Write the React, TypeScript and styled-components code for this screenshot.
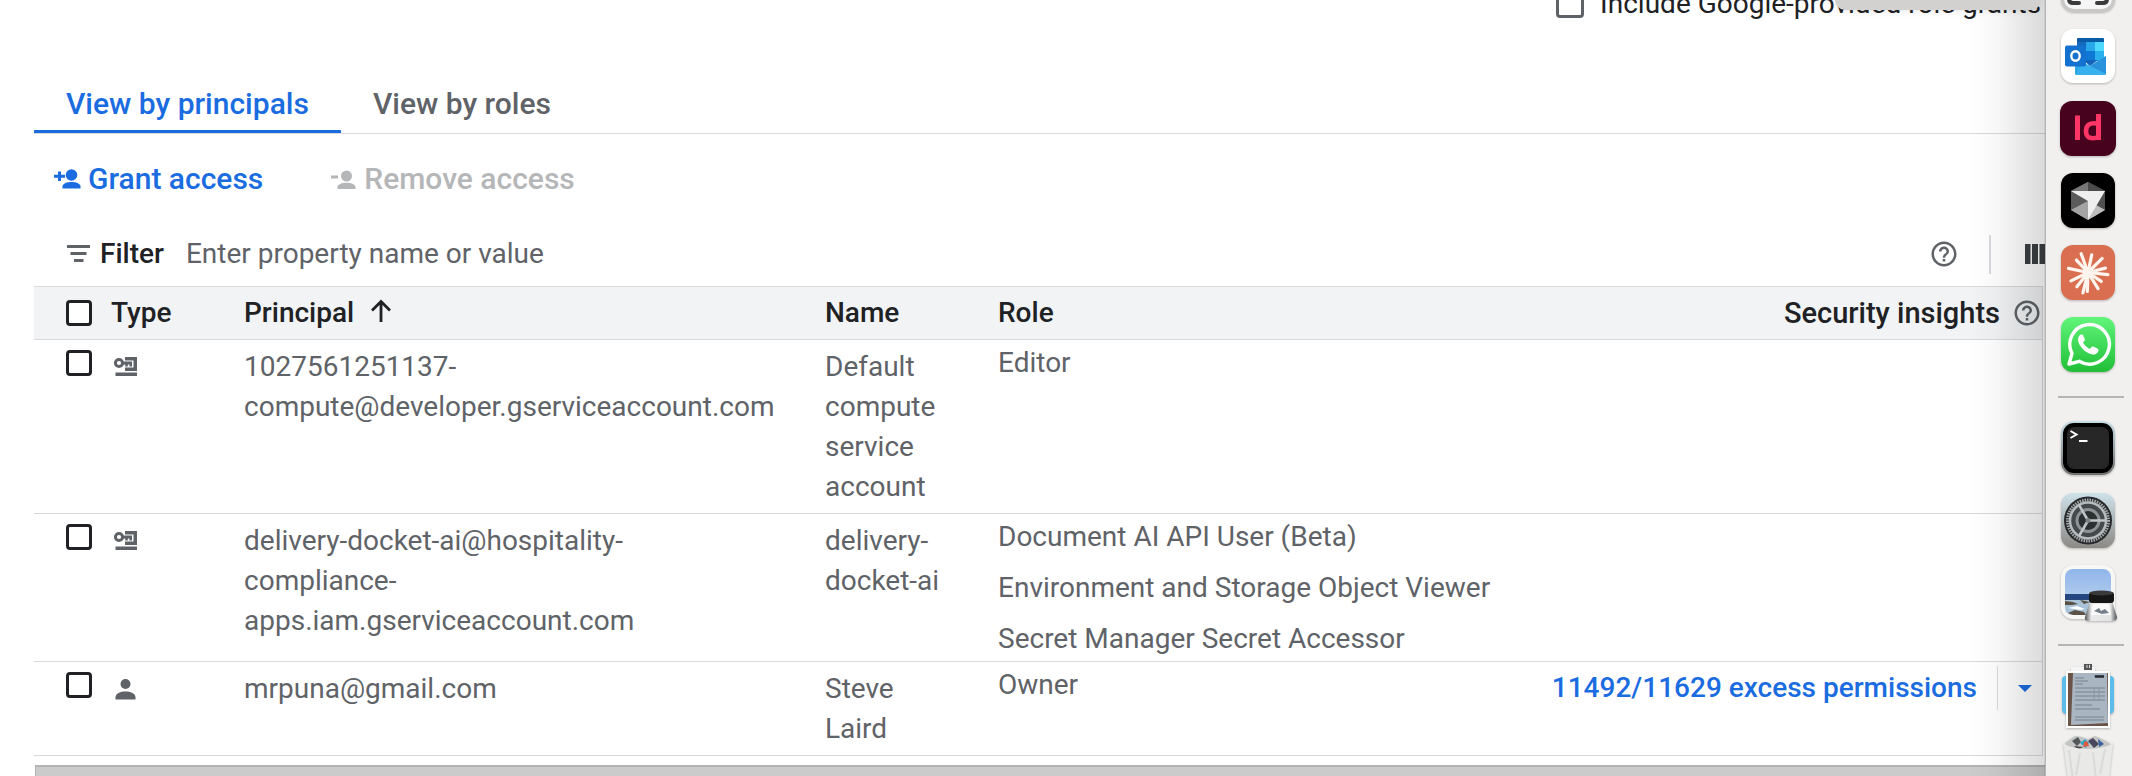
import React from 'react';
import styled, { createGlobalStyle } from 'styled-components';
import { MdHelpOutline } from 'react-icons/md';

const blue = '#1a6ce0';
const ink = '#202124';
const muted = '#5f6368';
const rule = '#d7d9dc';

const GlobalStyle = createGlobalStyle`
  *, *::before, *::after { box-sizing: border-box; }
  body {
    margin: 0;
    background: #fff;
    color: ${ink};
    font: 400 28px/40px Roboto, "Liberation Sans", sans-serif;
    overflow: hidden;
  }
  button, input { font: inherit; color: inherit; }
`;

const Page = styled.div`
  display: grid;
  grid-template-columns: minmax(0, 1fr) 87px;
  height: 100vh;
`;

const Main = styled.main`
  display: flex;
  flex-direction: column;
  min-width: 0;
  padding-left: 34px;
  overflow: hidden;
`;

const OptionRow = styled.div`
  display: flex;
  justify-content: flex-end;
  margin: -16px 4px 53px 0;
`;

const OptionLabel = styled.label`
  display: flex;
  align-items: center;
  gap: 16px;
`;

const CheckBox = styled.input.attrs({ type: 'checkbox' })<{ $tone?: string; $size?: number }>`
  appearance: none;
  display: block;
  flex: none;
  width: ${(p) => p.$size ?? 26}px;
  height: ${(p) => p.$size ?? 26}px;
  margin: 0;
  border: 3px solid ${(p) => p.$tone ?? ink};
  border-radius: 4px;
  background: #fff;
`;

const FloatingBar = styled.div`
  position: absolute;
  top: 0;
  right: 91px;
  width: 206px;
  height: 10px;
  border-radius: 0 0 10px 10px;
  background: #d2d1cf;
  box-shadow: 0 0 8px rgba(0, 0, 0, 0.12);
`;

const Tabs = styled.div`
  display: flex;
  flex: none;
  height: 57px;
  border-bottom: 1px solid ${rule};
`;

const Tab = styled.button<{ $active?: boolean }>`
  height: 56px;
  padding: 0 32px;
  border: 0;
  border-bottom: 3px solid ${(p) => (p.$active ? blue : 'transparent')};
  background: none;
  color: ${(p) => (p.$active ? blue : muted)};
  font-size: 30px;
  font-weight: 500;
`;

const Toolbar = styled.div`
  display: flex;
  flex: none;
  align-items: center;
  gap: 68px;
  height: 88px;
  padding: 2px 0 0 20px;
`;

const Action = styled.button`
  display: flex;
  align-items: center;
  gap: 7px;
  padding: 0;
  border: 0;
  background: none;
  color: ${blue};
  font-size: 30px;
  font-weight: 500;
  &:disabled { color: #b5b6b8; }
`;

const FilterBar = styled.div`
  display: flex;
  flex: none;
  align-items: center;
  height: 64px;
  padding-left: 33px;
  color: ${muted};
`;

const FilterLabel = styled.label`
  display: flex;
  align-items: center;
  gap: 10px;
  margin-right: 22px;
  font-weight: 500;
  span { color: ${ink}; }
`;

const FilterInput = styled.input`
  flex: 1;
  min-width: 0;
  padding: 0;
  border: 0;
  outline: 0;
  background: none;
  &::placeholder { color: ${muted}; opacity: 1; }
`;

const IconButton = styled.button`
  display: flex;
  padding: 0;
  border: 0;
  background: none;
  color: ${muted};
`;

const Divider = styled.span<{ $size: number; $weight: number }>`
  width: ${(p) => p.$weight}px;
  height: ${(p) => p.$size}px;
  background: ${rule};
`;

const FilterTools = styled.div`
  display: flex;
  align-items: center;
  gap: 30px;
`;

const ColumnsButton = styled(IconButton)`
  margin-left: 4px;
  color: #3c4043;
`;

const TableFrame = styled.div`
  flex: none;
  margin-right: 2px;
  border-right: 1px solid ${rule};
`;

const Table = styled.table`
  width: 100%;
  table-layout: fixed;
  border-spacing: 0;
`;

const Col = styled.col<{ $width?: number }>`
  width: ${(p) => (p.$width ? `${p.$width}px` : 'auto')};
`;

const HeadCell = styled.th`
  height: 54px;
  padding: 0;
  border-top: 1px solid ${rule};
  border-bottom: 1px solid ${rule};
  background: #f1f3f4;
  font-weight: 500;
  text-align: left;
  vertical-align: middle;
`;

const HeadContent = styled.div<{ $end?: boolean }>`
  display: flex;
  align-items: center;
  justify-content: ${(p) => (p.$end ? 'flex-end' : 'flex-start')};
  gap: ${(p) => (p.$end ? 12 : 16)}px;
  font-size: ${(p) => (p.$end ? 29 : 28)}px;
`;

const Cell = styled.td<{ $top?: number; $bottom?: number }>`
  padding: ${(p) => p.$top ?? 7}px 0 ${(p) => p.$bottom ?? 6}px;
  border-bottom: 1px solid ${rule};
  color: ${muted};
  vertical-align: top;
`;

const CheckSlot = styled.div`
  padding-left: 32px;
`;

const TypeIcon = styled.div`
  display: flex;
  padding-left: 3px;
`;

const Roles = styled.ul`
  display: grid;
  gap: 11px;
  margin: 0;
  padding: 0;
  list-style: none;
`;

const Insight = styled.div`
  display: flex;
  align-items: center;
  justify-content: flex-end;
  height: 44px;
  padding-right: 10px;
`;

const InsightLink = styled.a`
  margin-right: 20px;
  color: ${blue};
  font-weight: 500;
  text-decoration: none;
  white-space: nowrap;
`;

const MenuButton = styled(IconButton)`
  margin-left: 20px;
  color: ${blue};
`;

const ScrollTrack = styled.div`
  flex: 1;
  margin: 9px 0 0 1px;
  border: solid #b3b3b3;
  border-width: 2px 0 0 1px;
  background: #cbcbcb;
`;

const Dock = styled.aside`
  position: relative;
  min-height: 0;
  border-left: 1px solid #f7f6f5;
  background: #f1f0ee;
  &::before {
    content: '';
    position: absolute;
    top: 0;
    bottom: 0;
    right: 100%;
    width: 76px;
    background: linear-gradient(to right, rgba(0, 0, 0, 0), rgba(0, 0, 0, 0.03) 35%, rgba(0, 0, 0, 0.14) 97%, rgba(0, 0, 0, 0.3));
    pointer-events: none;
  }
`;

const DockScroll = styled.div`
  height: 100%;
  overflow: hidden;
`;

const DockList = styled.div`
  display: flex;
  flex-direction: column;
  align-items: center;
  gap: 16px;
  margin-top: -43px;
  padding-right: 2px;
`;

const DockApp = styled.button`
  flex: none;
  display: block;
  height: 56px;
  padding: 0;
  border: 0;
  background: none;
  svg { display: block; overflow: visible; filter: drop-shadow(0 1px 1px rgba(0, 0, 0, 0.25)); }
`;

const DockRule = styled.hr`
  flex: none;
  width: 66px;
  height: 2px;
  margin: 7px 0 7px 6px;
  border: 0;
  background: #b6b5b3;
`;

const PersonAdd = () => (
  <svg width="27" height="22" viewBox="0 0 27 22" fill="currentColor" aria-hidden="true">
    <circle cx="17.5" cy="7" r="5.8" />
    <path d="M8.5 20.5v-2.2c0-2.9 5-4.3 9-4.3s9 1.4 9 4.3v2.2z" />
    <path d="M4 3.5h3v3.2h4v3H7V13H4V9.7H0v-3h4z" />
  </svg>
);

const PersonRemove = () => (
  <svg width="26" height="22" viewBox="0 0 26 22" fill="currentColor" aria-hidden="true">
    <circle cx="15.5" cy="8" r="5.5" />
    <path d="M6.5 21v-2c0-2.8 5-4.2 9-4.2s9 1.4 9 4.2v2zM0 7.5h7v3H0z" />
  </svg>
);

const FilterIcon = () => (
  <svg width="23" height="18" viewBox="0 0 23 18" fill="currentColor" aria-hidden="true">
    <path d="M0 0h23v3H0zM3.5 7h16v3h-16zM7 14h9.5v3H7z" />
  </svg>
);

const ServiceAccountIcon = () => (
  <svg width="24" height="40" viewBox="0 0 24 40" fill="currentColor" role="img" aria-label="Service account">
    <path d="M1.5 25.5H23V29H1.5zM11 10h12v14H11v-3.500h8.500v-7H11z" />
    <circle cx="5" cy="16" r="3.600" fill="none" stroke="currentColor" strokeWidth="3" />
    <path d="M8 14.500h10v5h-2.600v-2h-1.600v2h-2.600v-2H8z" />
  </svg>
);

const PersonIcon = () => (
  <svg width="24" height="40" viewBox="0 0 24 40" fill="currentColor" role="img" aria-label="User">
    <circle cx="11.5" cy="15" r="5" />
    <path d="M1.5 30.5v-2.3c0-3.7 5-5.7 10-5.7s10 2 10 5.7v2.3z" />
  </svg>
);

const ArrowUp = () => (
  <svg width="22" height="28" viewBox="0 0 22 28" fill="none" stroke="currentColor" strokeWidth="2.800" aria-hidden="true">
    <path d="M11 23V3M2 11.500l9-9 9 9" />
  </svg>
);

const ColumnsIcon = () => (
  <svg width="20" height="20" viewBox="0 0 20 20" fill="currentColor" aria-hidden="true">
    <path d="M0 0h5.500v20H0zM7 0h6v20H7zM14.500 0h6v20h-6z" />
  </svg>
);

const CaptureApp = () => (
  <svg width="56" height="56" viewBox="0 0 56 56">
    <rect x="1" y="1" width="54" height="54" rx="13" fill="#c8c8c8" />
    <rect x="4" y="4" width="48" height="48" rx="10" fill="#f6f6f6" />
    <path d="M9 38v4q0 4 4 4h6M47 38v4q0 4-4 4h-6" fill="none" stroke="#3b3b3b" strokeWidth="4" strokeLinecap="round" />
  </svg>
);

const OutlookApp = () => (
  <svg width="56" height="56" viewBox="0 0 56 56">
    <rect x="1" width="54" height="54" rx="12" fill="#fff" />
    <rect x="17" y="9" width="27" height="7" rx="1" fill="#0a5aa6" />
    <path d="M17 13h9v9h-9z" fill="#1468bd" />
    <path d="M26 13h9v9h-9z" fill="#28a8ea" />
    <path d="M35 13h9v9h-9z" fill="#50d9ff" />
    <path d="M17 22h9v10h-9z" fill="#0f5aa8" />
    <path d="M26 22h9v10h-9z" fill="#0f78d4" />
    <path d="M35 22h9v10h-9z" fill="#2bb0ee" />
    <path d="M15 30l15 7 16-10v17.500a1.500 1.500 0 0 1-1.500 1.500H16.500a1.500 1.500 0 0 1-1.500-1.500z" fill="#30a5e6" />
    <path d="M23 31h15l-8 6z" fill="#1162b8" />
    <path d="M30 37l16-10v18z" fill="#2a92dc" />
    <path d="M22 33l24 12-1 1H16z" fill="#39b0ee" />
    <rect x="5" y="16.500" width="21" height="21" rx="2" fill="#1571cf" />
    <ellipse cx="15.500" cy="27" rx="4.200" ry="4.800" fill="none" stroke="#fff" strokeWidth="2.400" />
  </svg>
);

const InDesignApp = () => (
  <svg width="56" height="56" viewBox="0 0 56 56">
    <rect y="0" width="56" height="55" rx="12" fill="#47021d" />
    <path d="M17.500 14.500v24.500" stroke="#ff3566" strokeWidth="5" />
    <path d="M38.500 13v26" stroke="#ff3566" strokeWidth="5" />
    <path d="M37 22.500q-11-1.500-11 7.500t11 6.800" fill="none" stroke="#ff3566" strokeWidth="4.600" />
  </svg>
);

const CursorApp = () => (
  <svg width="56" height="56" viewBox="0 0 56 56">
    <rect x="1" width="54" height="55" rx="12" fill="#000" />
    <path d="M28 9l17 9v19l-17 10-17-10V18z" fill="#777" />
    <path d="M28 9l17 9H11z" fill="#4b4b4b" />
    <path d="M28 9v9H11z" fill="#777" />
    <path d="M11 18l17 10-17 9z" fill="#5b5b5b" />
    <path d="M11 37l17-9v19z" fill="#a3a3a3" />
    <path d="M45 18v19L36 32z" fill="#505050" />
    <path d="M28 47l17-10-9-5z" fill="#bdbdbd" />
    <path d="M11 18h34L28 47V28z" fill="#efefef" />
  </svg>
);

const rays = [
  [0, 20], [28, 16], [52, 19], [86, 19], [98, 21], [122, 18], [148, 19], [186, 20],
  [221, 17], [244, 20], [276, 18], [309, 20], [340, 18],
];

const ClaudeApp = () => (
  <svg width="56" height="56" viewBox="0 0 56 56">
    <rect x="1" width="54" height="55" rx="12" fill="#d96f50" />
    <g stroke="#fff5ee" strokeWidth="3.200" strokeLinecap="round">
      {rays.map(([a, r]) => (
        <path
          key={a}
          d={`M28 27.500L${28 + r * Math.cos(((a + 6) * Math.PI) / 180)} ${27.5 + r * Math.sin(((a + 6) * Math.PI) / 180)}`}
        />
      ))}
    </g>
    <circle cx="28" cy="27.500" r="5" fill="#fff5ee" />
  </svg>
);

const WhatsAppApp = () => (
  <svg width="56" height="56" viewBox="0 0 56 56">
    <defs>
      <linearGradient id="wa" x1="0" y1="0" x2="0" y2="1">
        <stop offset="0" stopColor="#62f57b" />
        <stop offset="1" stopColor="#20bf37" />
      </linearGradient>
    </defs>
    <rect x="1" width="54" height="55" rx="12" fill="url(#wa)" />
    <path d="M9 47l3-10.500A19.800 19.800 0 1 1 19.300 44.300z" fill="none" stroke="#fff" strokeWidth="3.400" strokeLinejoin="round" />
    <path d="M21.500 17.500c-1.500 0-3.500 2-3.500 5 0 6.500 9 15 15 15 3 0 5.500-2 5.500-4.500 0-1-.5-1.300-5.500-3.500-.8-.3-1.200 0-3 2.500-2.500-.8-5.500-3.500-7-6.500 2-2.200 2.200-2.500 1.700-3.500l-1.700-4c-.3-.4-.8-.5-1.500-.5z" fill="#fff" />
  </svg>
);

const TerminalApp = () => (
  <svg width="56" height="56" viewBox="0 0 56 56">
    <defs>
      <linearGradient id="term" x1="0" y1="0" x2="0" y2="1">
        <stop offset="0" stopColor="#c6dde6" />
        <stop offset="1" stopColor="#6f6f6f" />
      </linearGradient>
    </defs>
    <rect x="1" width="54" height="54" rx="13" fill="url(#term)" />
    <rect x="3" y="2" width="50" height="50" rx="11" fill="#000" />
    <rect x="7" y="6" width="42" height="42" rx="7" fill="#272727" />
    <path d="M10.500 10l6 3.500-6 3.500M19 20h8.500" fill="none" stroke="#fff" strokeWidth="2" />
  </svg>
);

const SettingsApp = () => (
  <svg width="56" height="56" viewBox="0 0 56 56">
    <defs>
      <linearGradient id="gear" x1="0" y1="0" x2="0" y2="1">
        <stop offset="0" stopColor="#cfe2ea" />
        <stop offset="1" stopColor="#8b8985" />
      </linearGradient>
    </defs>
    <rect x="1" width="54" height="55" rx="12" fill="url(#gear)" />
    <circle cx="28" cy="27.500" r="24" fill="#27292a" />
    <circle cx="28" cy="27.500" r="20.500" fill="none" stroke="#a5abad" strokeWidth="3" strokeDasharray="1.500 1" />
    <circle cx="28" cy="27.500" r="18" fill="#45494b" stroke="#b6bcbe" strokeWidth="2.500" />
    <circle cx="28" cy="27.500" r="11" fill="#2d3031" stroke="#8d9395" strokeWidth="3" />
    <path d="M28 27.500h18M28 27.500l-9-15.600M28 27.500l-9 15.600" stroke="#bfc5c7" strokeWidth="2.600" />
    <circle cx="28" cy="27.500" r="2.400" fill="#7d8385" />
  </svg>
);

const PreviewApp = () => (
  <svg width="56" height="56" viewBox="0 0 56 56">
    <defs>
      <linearGradient id="sky" x1="0" y1="0" x2="0" y2="1">
        <stop offset="0" stopColor="#8fb5ea" />
        <stop offset="1" stopColor="#c5d9ef" />
      </linearGradient>
      <linearGradient id="glass" x1="0" y1="0" x2="1" y2="0">
        <stop offset="0" stopColor="#4d5052" />
        <stop offset="0.2" stopColor="#e9eaea" />
        <stop offset="0.8" stopColor="#e2e3e3" />
        <stop offset="1" stopColor="#4d5052" />
      </linearGradient>
    </defs>
    <rect x="1" width="54" height="54" rx="12" fill="#f7f7f6" />
    <rect x="5" y="4" width="46" height="46" rx="8" fill="url(#sky)" />
    <path d="M5 29h46v6H5z" fill="#24477f" />
    <path d="M5 35h46v7q0 8-8 8H13q-8 0-8-8z" fill="#a9c3d8" />
    <path d="M5 36l8 1 5 2-6 1H5zM8 48l7-3 9 2 2 3H13zM20 35l10 2-6 2z" fill="#5b5245" />
    <path d="M8 43l9-2 8 3-5 1z" fill="#fff" />
    <path d="M30 36h22l5 16q0 4-5 4H29q-5 0-4-4z" fill="url(#glass)" />
    <path d="M33 39h16l2 11H31z" fill="#fafafa" />
    <path d="M34 46l5-3 2 3 4-2 4 4-7 1z" fill="#75808c" />
    <rect x="29" y="27" width="25" height="11" rx="3" fill="#161616" />
    <ellipse cx="41.500" cy="28" rx="12" ry="2.500" fill="#3a3a3a" />
  </svg>
);

const DocumentStack = () => (
  <svg width="56" height="66" viewBox="0 0 56 66">
    <path d="M2 17q0-4 4-4h44q4 0 4 4v29q0 5-5 5H7q-5 0-5-5z" fill="#5bbcea" />
    <path d="M11 4h24v10H11z" fill="#f5f5f5" />
    <path d="M24 1h8v6h-8z" fill="#555" />
    <path d="M27 2v3M29.500 2v3" stroke="#ddd" strokeWidth="1" />
    <rect x="6" y="8" width="44" height="57" fill="#fff" />
    <rect x="8" y="10" width="40" height="53" fill="#6b5446" />
    <path d="M13 10h34l1 50-37 2z" fill="#aab5c2" />
    <path d="M34 13h10M15 15h9M15 18h13M15 21h8M15 25h30M15 29h30M15 33h30M15 37h30M15 42h17M15 46h25M15 54h29M15 57h29" stroke="#77828f" strokeWidth="1" />
    <path d="M35 13.500h9" stroke="#262a30" strokeWidth="2.500" />
    <path d="M34 24v14M39 24v14" stroke="#8a95a2" strokeWidth="1" />
  </svg>
);

const TrashApp = () => (
  <svg width="56" height="56" viewBox="0 0 56 56">
    <path d="M5 9l4-3 6-4 7 1 6 2 7-3 7 3 6 3 3 3-5 6H9z" fill="#c4c6c5" />
    <path d="M12 7l6-4 3 5-4 4z" fill="#54575a" />
    <path d="M20 9l5-4 4 4-3 5z" fill="#2fa9c9" />
    <path d="M28 7l5-3 6 6-5 4z" fill="#49455c" />
    <path d="M24 8l3-1 2 5-6 1z" fill="#e05a43" />
    <path d="M38 5l6 5-5 3z" fill="#3c5f9e" />
    <path d="M14 12l9 1-5 3z" fill="#444" />
    <path d="M3 8q3 6 25 7 22-1 25-7l-5 46H9z" fill="#e9e9e7" />
    <path d="M9 16l4 30M20 19l-4 22M33 18l3 28M45 15l-5 25" stroke="#dadad8" strokeWidth="2" fill="none" />
  </svg>
);

const StackButton = styled(DockApp)`
  height: 66px;
  margin: -6px 0 -11px;
`;

const rows = [
  {
    id: 'compute',
    icon: <ServiceAccountIcon />,
    principal: ['1027561251137-', 'compute@developer.gserviceaccount.com'],
    name: ['Default', 'compute', 'service', 'account'],
    roles: ['Editor'],
  },
  {
    id: 'docket',
    icon: <ServiceAccountIcon />,
    principal: ['delivery-docket-ai@hospitality-', 'compliance-', 'apps.iam.gserviceaccount.com'],
    name: ['delivery-', 'docket-ai'],
    roles: ['Document AI API User (Beta)', 'Environment and Storage Object Viewer', 'Secret Manager Secret Accessor'],
  },
  {
    id: 'owner',
    icon: <PersonIcon />,
    principal: ['mrpuna@gmail.com'],
    name: ['Steve', 'Laird'],
    roles: ['Owner'],
    insight: '11492/11629 excess permissions',
  },
];

const Lines = ({ of }: { of: string[] }) => (
  <>
    {of.map((line, i) => (
      <React.Fragment key={line}>
        {i > 0 && <br />}
        {line}
      </React.Fragment>
    ))}
  </>
);

export default function App() {
  return (
    <Page>
      <GlobalStyle />
      <Main>
        <OptionRow>
          <OptionLabel>
            <CheckBox $tone={muted} $size={28} />
            Include Google-provided role grants
          </OptionLabel>
        </OptionRow>
        <Tabs role="tablist">
          <Tab $active role="tab" aria-selected="true">View by principals</Tab>
          <Tab role="tab" aria-selected="false">View by roles</Tab>
        </Tabs>
        <Toolbar>
          <Action><PersonAdd />Grant access</Action>
          <Action disabled><PersonRemove />Remove access</Action>
        </Toolbar>
        <FilterBar>
          <FilterLabel htmlFor="filter"><FilterIcon /><span>Filter</span></FilterLabel>
          <FilterInput id="filter" placeholder="Enter property name or value" />
          <FilterTools>
            <IconButton aria-label="Filter help"><MdHelpOutline size={30} /></IconButton>
            <Divider $size={39} $weight={2} />
            <ColumnsButton aria-label="Columns"><ColumnsIcon /></ColumnsButton>
          </FilterTools>
        </FilterBar>
        <TableFrame>
          <Table>
            <colgroup>
              <Col $width={77} />
              <Col $width={133} />
              <Col $width={581} />
              <Col $width={173} />
              <Col />
              <Col $width={500} />
            </colgroup>
            <thead>
              <tr>
                <HeadCell><CheckSlot><CheckBox aria-label="Select all" /></CheckSlot></HeadCell>
                <HeadCell>Type</HeadCell>
                <HeadCell aria-sort="ascending"><HeadContent>Principal<ArrowUp /></HeadContent></HeadCell>
                <HeadCell>Name</HeadCell>
                <HeadCell>Role</HeadCell>
                <HeadCell>
                  <HeadContent $end>
                    Security insights
                    <IconButton aria-label="Security insights help"><MdHelpOutline size={30} /></IconButton>
                  </HeadContent>
                </HeadCell>
              </tr>
            </thead>
            <tbody>
              {rows.map((row) => (
                <tr key={row.id}>
                  <Cell $top={10}><CheckSlot><CheckBox aria-label={`Select ${row.principal.join('')}`} /></CheckSlot></Cell>
                  <Cell><TypeIcon>{row.icon}</TypeIcon></Cell>
                  <Cell><Lines of={row.principal} /></Cell>
                  <Cell><Lines of={row.name} /></Cell>
                  <Cell $top={3} $bottom={2}>
                    <Roles>{row.roles.map((role) => <li key={role}>{role}</li>)}</Roles>
                  </Cell>
                  <Cell $top={4}>
                    {row.insight && (
                      <Insight>
                        <InsightLink href="#insights">{row.insight}</InsightLink>
                        <Divider $size={44} $weight={1} />
                        <MenuButton aria-label="More insights">
                          <svg width="14" height="7" viewBox="0 0 14 7" fill="currentColor"><path d="M0 0h14L7 7z" /></svg>
                        </MenuButton>
                      </Insight>
                    )}
                  </Cell>
                </tr>
              ))}
            </tbody>
          </Table>
        </TableFrame>
        <ScrollTrack />
      </Main>
      <Dock aria-label="Dock">
        <DockScroll>
          <DockList>
            <DockApp aria-label="Screenshot"><CaptureApp /></DockApp>
            <DockApp aria-label="Outlook"><OutlookApp /></DockApp>
            <DockApp aria-label="InDesign"><InDesignApp /></DockApp>
            <DockApp aria-label="Cursor"><CursorApp /></DockApp>
            <DockApp aria-label="Claude"><ClaudeApp /></DockApp>
            <DockApp aria-label="WhatsApp"><WhatsAppApp /></DockApp>
            <DockRule />
            <DockApp aria-label="Terminal"><TerminalApp /></DockApp>
            <DockApp aria-label="Settings"><SettingsApp /></DockApp>
            <DockApp aria-label="Preview"><PreviewApp /></DockApp>
            <DockRule />
            <StackButton aria-label="Documents"><DocumentStack /></StackButton>
            <DockApp aria-label="Trash"><TrashApp /></DockApp>
          </DockList>
        </DockScroll>
      </Dock>
      <FloatingBar />
    </Page>
  );
}
